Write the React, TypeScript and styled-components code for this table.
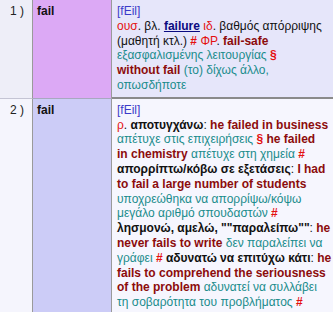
import React from 'react';
import styled, { createGlobalStyle } from 'styled-components';

const GlobalStyle = createGlobalStyle`
  html, body {
    margin: 0;
    padding: 0;
    background: #ffffff;
  }
  body {
    font-family: "Liberation Sans", Arial, sans-serif;
    font-size: 12px;
  }
`;

type Tone = 'pron' | 'abbr' | 'mark' | 'plain' | 'def' | 'link' | 'example' | 'trans';

const Table = styled.div`
  display: grid;
  grid-template-columns: 33px 79px 1fr;
  width: 333px;
  line-height: 14.8px;
`;

const NumCell = styled.div<{ $alt: boolean }>`
  background: ${p => (p.$alt ? '#f5f5fd' : '#eeeef8')};
  border-right: 1px solid #9a9a9a;
  border-bottom: 1px solid ${p => (p.$alt ? 'transparent' : '#c4c4d4')};
  padding: 4px 0 4px 10px;
  color: #222;
`;

const WordCell = styled.div<{ $alt: boolean }>`
  background: ${p => (p.$alt ? '#ccccf7' : '#dca9f5')};
  border-right: 1px solid #9a9a9a;
  border-bottom: 1px solid ${p => (p.$alt ? 'transparent' : '#a8a8c0')};
  padding: 4px 4px;
  font-weight: bold;
  color: #111;
`;

const MeaningCell = styled.div<{ $alt: boolean }>`
  background: ${p => (p.$alt ? '#f6f6fe' : '#e6e6fa')};
  border-bottom: ${p => (p.$alt ? '0' : '2px solid #8a8a8a')};
  padding: 4px 4px 4px 5px;
  color: #111;
  overflow: hidden;
`;

const Line = styled.div`
  white-space: nowrap;
`;

const toneColor: Record<Tone, string> = {
  pron: '#3a3ac8',
  abbr: '#e41010',
  mark: '#e41010',
  plain: '#111111',
  def: '#111111',
  link: '#0a0a80',
  example: '#8c0c0c',
  trans: '#1a8c8c',
};

const Part = styled.span<{ $tone: Tone }>`
  color: ${p => toneColor[p.$tone]};
  font-weight: ${p =>
    p.$tone === 'pron' || p.$tone === 'abbr' || p.$tone === 'plain' || p.$tone === 'trans'
      ? 'normal'
      : 'bold'};
  text-decoration: ${p => (p.$tone === 'link' ? 'underline' : 'none')};
`;

type Piece = [Tone, string];

interface Entry {
  num: number;
  word: string;
  lines: Piece[][];
}

const entries: Entry[] = [
  {
    num: 1,
    word: 'fail',
    lines: [
      [['pron', '[fEil]']],
      [
        ['abbr', 'ουσ'],
        ['plain', '. βλ. '],
        ['link', 'failure'],
        ['plain', ' '],
        ['abbr', 'ιδ'],
        ['plain', '. βαθμός απόρριψης'],
      ],
      [
        ['plain', '(μαθητή κτλ.) '],
        ['mark', '# '],
        ['abbr', 'ΦΡ'],
        ['plain', '. '],
        ['example', 'fail-safe'],
      ],
      [
        ['trans', 'εξασφαλισμένης λειτουργίας '],
        ['mark', '§'],
      ],
      [
        ['example', 'without fail'],
        ['trans', ' (το) δίχως άλλο,'],
      ],
      [['trans', 'οπωσδήποτε']],
    ],
  },
  {
    num: 2,
    word: 'fail',
    lines: [
      [['pron', '[fEil]']],
      [
        ['abbr', 'ρ'],
        ['plain', '. '],
        ['def', 'αποτυγχάνω'],
        ['plain', ': '],
        ['example', 'he failed in business'],
      ],
      [
        ['trans', 'απέτυχε στις επιχειρήσεις '],
        ['mark', '§'],
        ['plain', ' '],
        ['example', 'he failed'],
      ],
      [
        ['example', 'in chemistry'],
        ['trans', ' απέτυχε στη χημεία '],
        ['mark', '#'],
      ],
      [
        ['def', 'απορρίπτω/κόβω σε εξετάσεις'],
        ['plain', ': '],
        ['example', 'I had'],
      ],
      [['example', 'to fail a large number of students']],
      [['trans', 'υποχρεώθηκα να απορρίψω/κόψω']],
      [
        ['trans', 'μεγάλο αριθμό σπουδαστών '],
        ['mark', '#'],
      ],
      [
        ['def', 'λησμονώ, αμελώ, ""παραλείπω""'],
        ['plain', ': '],
        ['example', 'he'],
      ],
      [
        ['example', 'never fails to write'],
        ['trans', ' δεν παραλείπει να'],
      ],
      [
        ['trans', 'γράφει '],
        ['mark', '#'],
        ['plain', ' '],
        ['def', 'αδυνατώ να επιτύχω κάτι'],
        ['plain', ': '],
        ['example', 'he'],
      ],
      [['example', 'fails to comprehend the seriousness']],
      [
        ['example', 'of the problem'],
        ['trans', ' αδυνατεί να συλλάβει'],
      ],
      [
        ['trans', 'τη σοβαρότητα του προβλήματος '],
        ['mark', '#'],
      ],
    ],
  },
];

const App: React.FC = () => {
  return (
    <>
      <GlobalStyle />
      <Table>
        {entries.map((entry, i) => {
          const alt = i % 2 === 1;
          return (
            <React.Fragment key={entry.num}>
              <NumCell $alt={alt}>{entry.num} )</NumCell>
              <WordCell $alt={alt}>{entry.word}</WordCell>
              <MeaningCell $alt={alt}>
                {entry.lines.map((line, j) => (
                  <Line key={j}>
                    {line.map(([tone, text], k) => (
                      <Part key={k} $tone={tone}>{text}</Part>
                    ))}
                  </Line>
                ))}
              </MeaningCell>
            </React.Fragment>
          );
        })}
      </Table>
    </>
  );
};

export default App;
